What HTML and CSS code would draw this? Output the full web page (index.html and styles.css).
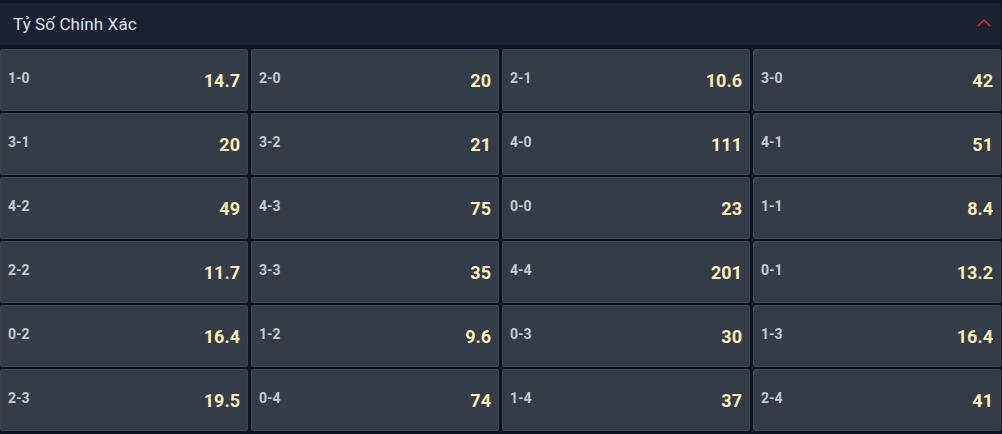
FILE: index.html
```html
<!DOCTYPE html>
<html lang="vi">
<head>
<meta charset="utf-8">
<link rel="stylesheet" href="styles.css">
</head>
<body>
<div class="panel">
  <div class="header">
    <span class="title">Tỷ Số Chính Xác</span>
    <svg class="chev" width="14" height="8" viewBox="0 0 14 8"><path d="M1 7 L7 1 L13 7" fill="none" stroke="#e8262b" stroke-width="1.5"/></svg>
  </div>
  <div class="grid">
    <div class="cell"><span class="lbl">1-0</span><span class="odd">14.7</span></div>
    <div class="cell"><span class="lbl">2-0</span><span class="odd">20</span></div>
    <div class="cell"><span class="lbl">2-1</span><span class="odd">10.6</span></div>
    <div class="cell"><span class="lbl">3-0</span><span class="odd">42</span></div>
    <div class="cell"><span class="lbl">3-1</span><span class="odd">20</span></div>
    <div class="cell"><span class="lbl">3-2</span><span class="odd">21</span></div>
    <div class="cell"><span class="lbl">4-0</span><span class="odd">111</span></div>
    <div class="cell"><span class="lbl">4-1</span><span class="odd">51</span></div>
    <div class="cell"><span class="lbl">4-2</span><span class="odd">49</span></div>
    <div class="cell"><span class="lbl">4-3</span><span class="odd">75</span></div>
    <div class="cell"><span class="lbl">0-0</span><span class="odd">23</span></div>
    <div class="cell"><span class="lbl">1-1</span><span class="odd">8.4</span></div>
    <div class="cell"><span class="lbl">2-2</span><span class="odd">11.7</span></div>
    <div class="cell"><span class="lbl">3-3</span><span class="odd">35</span></div>
    <div class="cell"><span class="lbl">4-4</span><span class="odd">201</span></div>
    <div class="cell"><span class="lbl">0-1</span><span class="odd">13.2</span></div>
    <div class="cell"><span class="lbl">0-2</span><span class="odd">16.4</span></div>
    <div class="cell"><span class="lbl">1-2</span><span class="odd">9.6</span></div>
    <div class="cell"><span class="lbl">0-3</span><span class="odd">30</span></div>
    <div class="cell"><span class="lbl">1-3</span><span class="odd">16.4</span></div>
    <div class="cell"><span class="lbl">2-3</span><span class="odd">19.5</span></div>
    <div class="cell"><span class="lbl">0-4</span><span class="odd">74</span></div>
    <div class="cell"><span class="lbl">1-4</span><span class="odd">37</span></div>
    <div class="cell"><span class="lbl">2-4</span><span class="odd">41</span></div>
  </div>
</div>
</body>
</html>
```
FILE: styles.css
```css
html, body {
  margin: 0;
  padding: 0;
  background: #0c1423;
  font-family: Roboto, "Liberation Sans", sans-serif;
}
.panel {
  width: 1001px;
  padding-top: 3px;
}
.header {
  height: 42px;
  background: #1b2333;
  display: flex;
  align-items: center;
  justify-content: space-between;
  padding: 0 9px 0 13px;
}
.title {
  color: #dfe3ea;
  font-size: 17px;
  letter-spacing: 0.1px;
}
.chev {
  display: block;
  margin-top: -2px;
  margin-right: 1px;
}
.grid {
  margin-top: 4px;
  display: grid;
  grid-template-columns: repeat(4, 248px);
  grid-auto-rows: 62px;
  gap: 2px 3px;
}
.cell {
  background: #343c48;
  border: 1px solid #3d4551;
  border-radius: 2px;
  display: flex;
  align-items: center;
  justify-content: space-between;
  padding: 0 7px 0 7px;
}
.lbl {
  color: #c5cad3;
  font-size: 14px;
  font-weight: 700;
  margin-top: -4px;
}
.odd {
  color: #fdeeb3;
  font-size: 18px;
  font-weight: 700;
  margin-top: 1px;
}
```
